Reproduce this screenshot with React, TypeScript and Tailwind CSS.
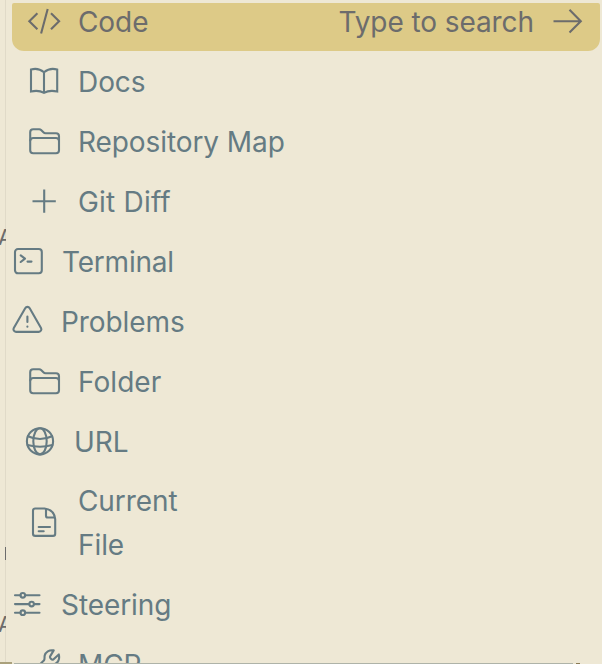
import type { ReactNode } from 'react';

interface IconProps {
  children: ReactNode;
  className?: string;
  stroke?: number;
}

function Icon({ children, className = '', stroke = 2.1 }: IconProps) {
  return (
    <svg
      width="36"
      height="36"
      viewBox="0 0 36 36"
      fill="none"
      stroke="currentColor"
      strokeWidth={stroke}
      strokeLinecap="round"
      strokeLinejoin="round"
      className={`shrink-0 ${className}`}
    >
      {children}
    </svg>
  );
}

// All icons are drawn on a 36px grid
const icons = {
  code: (
    <path d="m11.400 9.200-8.100 8 8.100 8.100M21.700 5l-6.600 24.400M25 9.200l8.100 8-8.100 8.100" strokeLinecap="butt" strokeLinejoin="miter" />
  ),
  docs: (
    <path d="M18 8.200C14 5 8.500 4.500 5 5.600v21.900c4.300-1 9.200-.8 13 1.300 3.800-2.100 8.700-2.300 13.200-1.300V5.600C27.500 4.500 22 5 18 8.200zm0 0v20.600" strokeLinejoin="miter" />
  ),
  folder: (
    <>
      <path d="M4.200 11V8.200a3 3 0 0 1 3-3h6q1.100 0 1.900.8l2.300 2.300q.9.900 2.100.9H30a3 3 0 0 1 3 3v14a3 3 0 0 1-3 3H7.200a3 3 0 0 1-3-3z" />
      <path d="M4.200 16.500a3 3 0 0 1 3-2.500H30a3 3 0 0 1 3 2.500" />
    </>
  ),
  plus: <path d="M18.200 5.500v23.200M6.500 17.200h23.300" strokeLinecap="butt" />,
  terminal: (
    <>
      <rect x="5" y="5" width="26.800" height="24.300" rx="3" />
      <path d="m10.700 11.300 4.300 3.300-4.300 3.400M17.500 17.600h4" />
    </>
  ),
  problems: (
    <>
      <path d="M16.200 4.200a2.600 2.600 0 0 1 4.500 0l11.300 19.800a2.600 2.600 0 0 1-2.200 3.900H7a2.600 2.600 0 0 1-2.200-3.900z" />
      <path d="M18.400 12.500v5.500M18.400 22.600v.1" />
    </>
  ),
  globe: (
    <>
      <circle cx="18" cy="17.300" r="13.100" />
      <ellipse cx="18" cy="17.300" rx="6.700" ry="13.100" />
      <path d="M6 12.200q12 5.600 24 0M5.500 21q12.500 3.400 25 0" />
    </>
  ),
  file: (
    <>
      <path d="M9.200 3.500h9.300c6.300.8 10.200 4.800 10.700 10.700v14.500a2.200 2.200 0 0 1-2.200 2.200H9.200A2.200 2.200 0 0 1 7 28.700V5.700a2.200 2.200 0 0 1 2.200-2.200z" />
      <path d="M20 4v6.700a1.800 1.800 0 0 0 1.800 1.800H28M12.700 22h11.300M12.700 26.200h5" />
    </>
  ),
  steering: (
    <>
      <path d="M6 8.300h5.500M16.100 8.300h14.400M6 17.100h14.300M24.900 17.100h5.600M6 25.700h5.500M16.100 25.700h14.400" />
      <circle cx="13.800" cy="8.300" r="2.300" />
      <circle cx="22.600" cy="17.100" r="2.300" />
      <circle cx="13.800" cy="25.700" r="2.300" />
    </>
  ),
  wrench: (
    <path d="M27.700 3.400c-4.500-.8-8.200 1.600-9 5.200-.4 1.900.2 3.200-.6 4.600L6 25.200a3.500 3.500 0 0 0 5 5l12-12c1.300-.9 3 0 5-.6 4-1.200 6-5.500 4.800-10.200l-5.500 5.200c-1.500.6-3.800-1.700-3.200-3.200z" />
  ),
};

interface RowProps {
  icon: keyof typeof icons;
  label: ReactNode;
  className?: string;
}

function Row({ icon, label, className = 'gap-4 pl-[20px]' }: RowProps) {
  return (
    <li className={`flex shrink-0 items-center py-2 leading-[44px] ${className}`}>
      <Icon>{icons[icon]}</Icon>
      <span>{label}</span>
    </li>
  );
}

export default function App() {
  return (
    <div className="relative h-[664px] w-[602px] overflow-hidden bg-[#eee8d5] font-['Inter',sans-serif] text-[28px] tracking-[-0.08px] text-[#657b83]">
      {/* Editor text showing past the edge of the menu */}
      <div className="absolute inset-y-0 left-0 w-1.5 overflow-hidden text-[22px] leading-none tracking-normal text-[#6c6c6c]">
        <span className="absolute inset-y-0 left-[5px] w-px bg-[#e0dac8]" />
        <span className="absolute -left-[2px] top-[226px]">A</span>
        <span className="absolute left-[5px] top-[547px] h-[13px] w-px bg-[#6c6c6c]" />
        <span className="absolute -left-[2px] top-[613px]">A</span>
      </div>

      <ul className="flex h-full flex-col pl-1.5 pt-[3px]">
        <li className="mb-px ml-1.5 mr-0.5 flex h-12 shrink-0 items-center rounded-b-[12px] rounded-t-[2px] bg-[#ddca87] pb-[10px] pl-[14px] pr-[14px] text-[#6c6c6c]">
          <Icon>{icons.code}</Icon>
          <span className="ml-4">Code</span>
          <span className="ml-auto">Type to search</span>
          <Icon className="ml-4">
            <path d="M3.500 17.200h27M19.500 5.800l11.300 11.400-11.300 11.400" strokeLinecap="butt" strokeLinejoin="miter" />
          </Icon>
        </li>
        <Row icon="docs" label="Docs" />
        <Row icon="folder" label="Repository Map" />
        <Row icon="plus" label="Git Diff" className="gap-4 pl-[20px] tracking-[0.2px]" />
        <Row icon="terminal" label="Terminal" className="gap-4 pl-[4px] tracking-[-0.2px]" />
        <Row icon="problems" label="Problems" className="gap-4 pl-[3px]" />
        <Row icon="folder" label="Folder" className="gap-4 pl-[20px] tracking-[0.05px]" />
        <Row icon="globe" label="URL" className="gap-4 pl-[16px]" />
        <Row
          icon="file"
          className="-mt-px gap-4 pl-[20px]"
          label={
            <>
              Current
              <br />
              File
            </>
          }
        />
        <Row icon="steering" label="Steering" className="gap-4 pl-[3px]" />
        <Row icon="wrench" label="MCP" />
      </ul>

      {/* Lower border of the menu */}
      <div className="absolute bottom-0 left-[14px] h-px w-[559px] bg-[#aeb3a8]" />
      <div className="absolute bottom-0 left-0 h-0.5 w-3 bg-[#aaa17c]" />
      <div className="absolute bottom-0 left-[576px] h-px w-1 bg-[#8a7b55]" />
    </div>
  );
}
